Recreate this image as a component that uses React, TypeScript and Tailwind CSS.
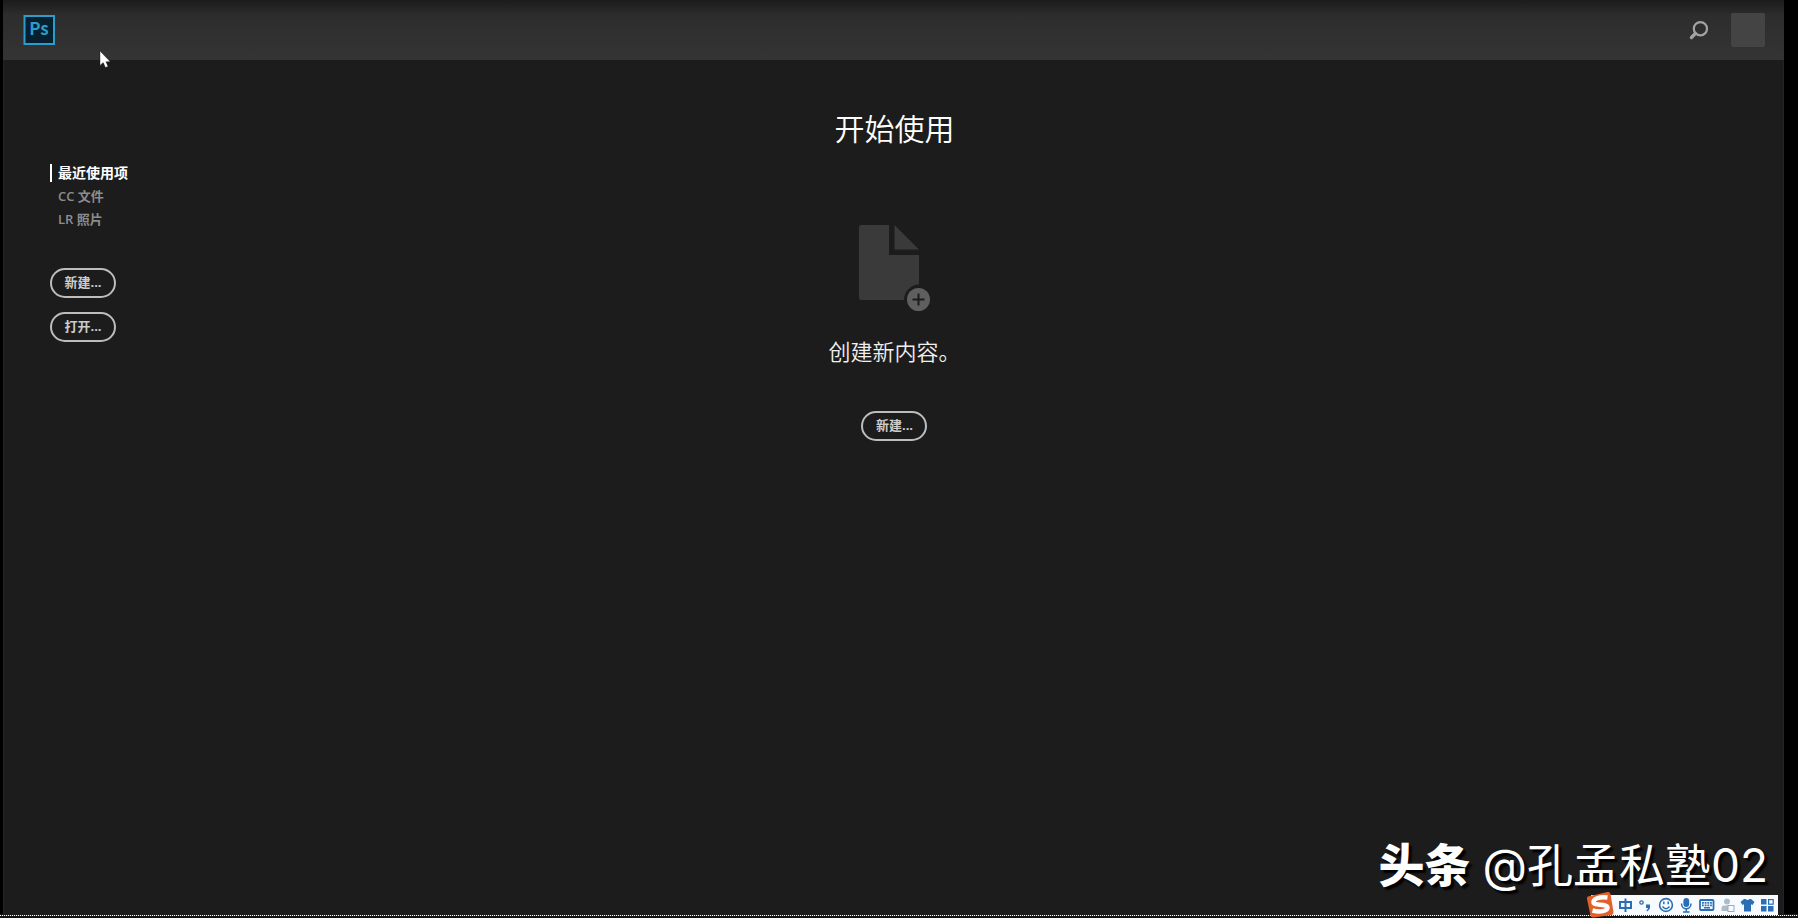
import React from "react";

function PillButton({ children }: { children: React.ReactNode }) {
  return (
    <button
      type="button"
      className="flex h-[30px] w-[66px] items-center justify-center rounded-full border-2 border-[#bdbdbd] pb-[2px] text-[13px] leading-none font-bold text-[#cccccc]"
    >
      {children}
    </button>
  );
}

function PsLogo() {
  return (
    <svg width="32" height="31" viewBox="0 0 32 31" role="img" aria-label="Photoshop">
      <rect x="1.500" y="1" width="29.500" height="28" fill="#06202f" stroke="#2d9cc9" strokeWidth="2" />
      <text x="16" y="20" textAnchor="middle" fontSize="17" fontWeight="700" fill="#2d9cc9" fontFamily="'Noto Sans CJK SC', sans-serif">
        Ps
      </text>
    </svg>
  );
}

function SearchIcon() {
  return (
    <svg width="20" height="20" viewBox="0 0 20 20" fill="none" stroke="#a3a3a3" aria-hidden="true">
      <circle cx="11.400" cy="8.700" r="6.600" strokeWidth="2.200" />
      <path d="M6.400 13.500 2.400 17.500" strokeWidth="3.200" strokeLinecap="round" />
    </svg>
  );
}

function NewDocumentIcon() {
  return (
    <svg width="72" height="87" viewBox="0 0 72 87" aria-hidden="true">
      <path d="M2 0H30V30H60V59.500A15.500 15.500 0 0 0 45 75H2Q0 75 0 73V2Q0 0 2 0Z" fill="#3a3a3a" />
      <path d="M35.500 0 60 24.500H35.500Z" fill="#3a3a3a" />
      <circle cx="59.500" cy="74.500" r="11.500" fill="#5f5f5f" />
      <path d="M53.500 74.500H65.500M59.500 68.500V80.500" stroke="#1c1c1c" strokeWidth="2" />
    </svg>
  );
}

function Cursor() {
  return (
    <svg className="absolute top-[50px] left-[99px]" width="12" height="19" viewBox="0 0 12 19" aria-hidden="true">
      <path d="M1 1V15.500L4.200 12.600 6.400 17.500 9 16.400 7 11.700H11.300Z" fill="#fff" stroke="#111" strokeWidth=".4" />
    </svg>
  );
}

function InputMethodBar() {
  return (
    <div className="absolute right-[20px] bottom-[3px] flex h-[20px] items-center bg-[#f7fbff] pl-[27px]">
      <svg className="absolute -top-[4px] -left-[5px]" width="29" height="27" viewBox="0 0 29 27" aria-hidden="true">
        <path d="M2 5.500 21.500 1Q24 .6 24.500 3L27.500 21Q27.800 23.400 25.500 24L7.500 26.500Q5 26.800 4.500 24.500L1 8Q.5 6 2 5.500Z" fill="#e2602a" />
        <path d="M21.500 6.500C13 5.500 7 8 7.500 11.500 8 15 21 12.500 21.500 16.500 22 20 14 21.500 6.500 19.500" fill="none" stroke="#fff" strokeWidth="4.400" />
      </svg>
      <svg width="137" height="20" viewBox="0 0 137 20" fill="none" stroke="#2a6fb5" aria-hidden="true">
        <path d="M2 7H13V13H2ZM7.500 3.500V17" strokeWidth="2" />
        <circle cx="23.500" cy="7.500" r="1.700" strokeWidth="1.300" />
        <path d="M28 9.500H32V13Q31 15.500 29 16.500L28.400 15Q30 14.300 30 13H28Z" fill="#2a6fb5" stroke="none" />
        <circle cx="48" cy="10" r="6.400" strokeWidth="1.600" />
        <path d="M45.800 6.500V9.200M50.200 6.500V9.200M44.500 11.500Q48 15.800 51.500 11.500" strokeWidth="1.500" />
        <rect x="65.400" y="3" width="5.800" height="9" rx="2.900" fill="#2a6fb5" stroke="none" />
        <path d="M63.500 8.500C63.500 15.500 73 15.500 73 8.500M68.300 14V17M65 17H71.600" strokeWidth="1.500" />
        <rect x="82" y="5" width="13.500" height="10" rx="1" strokeWidth="1.800" />
        <path d="M84 7.800H94M84 10.300H94" strokeWidth="1.800" strokeDasharray="1.800 .9" />
        <path d="M86 12.800H92" strokeWidth="1.500" />
        <circle cx="109" cy="6.500" r="3" fill="#aebdca" stroke="none" />
        <path d="M103.500 16V13Q103.500 10.500 106 10.500H112V16Z" fill="#aebdca" stroke="none" />
        <rect x="110" y="10.500" width="6" height="6" fill="#f7fbff" stroke="#9babb9" />
        <path d="M126 4 122.500 7 124.500 10 126 9.200V16.500H133V9.200L134.500 10 136.500 7 133 4H131.500Q129.500 6 127.500 4Z" fill="#2a6fb5" stroke="none" />
      </svg>
      <svg className="ml-[5px]" width="18" height="20" viewBox="0 0 18 20" fill="#2a6fb5" aria-hidden="true">
        <rect x="1" y="4" width="5.500" height="5.500" />
        <rect x="8.600" y="4.600" width="4.600" height="4.600" fill="none" stroke="#2a6fb5" strokeWidth="1.200" />
        <rect x="1" y="11" width="5.500" height="5.500" />
        <rect x="8" y="11" width="5.500" height="5.500" />
      </svg>
    </div>
  );
}

const tabs = ["最近使用项", "CC 文件", "LR 照片"];

export default function App() {
  return (
    <div className="relative flex min-h-screen flex-col overflow-hidden bg-black pr-[14px] pl-[3px] font-['Open_Sans','Noto_Sans_CJK_SC',sans-serif]">
      <header className="flex h-[60px] items-center justify-between bg-linear-to-b from-[#1b1b1b] via-[#2d2d2d] via-25% to-[#343434] pr-[19px] pl-[20px]">
        <PsLogo />
        <div className="flex items-center gap-[22px]">
          <button type="button" aria-label="搜索">
            <SearchIcon />
          </button>
          <button type="button" aria-label="账户" className="size-[34px] rounded-xs bg-[#444444]" />
        </div>
      </header>

      <main className="grid flex-1 grid-cols-[1fr_auto_1fr] items-start border-x border-[#242424] bg-[#1c1c1c]">
        <aside className="pt-[101px] pl-[46px]">
          <nav className="flex flex-col items-start">
            {tabs.map((tab, index) => (
              <a
                key={tab}
                href="#"
                className={
                  index === 0
                    ? "flex h-[24px] items-center text-[14px] leading-none font-bold text-white"
                    : "flex h-[23px] items-center text-[13px] leading-none font-semibold text-[#8c8c8c]"
                }
              >
                <span className={index === 0 ? "mr-[6px] h-[18px] w-[2px] bg-white" : "mr-[6px] h-[18px] w-[2px]"} />
                {tab}
              </a>
            ))}
          </nav>
          <div className="mt-[37px] flex flex-col gap-[14px]">
            <PillButton>新建...</PillButton>
            <PillButton>打开...</PillButton>
          </div>
        </aside>

        <section className="flex flex-col items-center pt-[47px] pl-[2px]">
          <h1 className="text-[30px] leading-[44px] font-[350] text-white">开始使用</h1>
          <div className="mt-[74px] pl-[2px]">
            <NewDocumentIcon />
          </div>
          <p className="mt-[23px] text-[22px] leading-[32px] font-[350] text-[#f0f0f0]">创建新内容。</p>
          <div className="mt-[44px]">
            <PillButton>新建...</PillButton>
          </div>
        </section>
      </main>

      <div className="-mr-[14px] -ml-[3px] h-[4px] bg-[#1c1c1c] pt-px">
        <div className="h-px bg-[repeating-linear-gradient(90deg,#ffffff_0_1px,#333_1px_2px)]" />
        <div className="h-[2px] bg-[#151515]" />
      </div>

      <div className="absolute right-[30px] bottom-[20px] flex items-center gap-[12px] font-['Inter','Noto_Sans_CJK_SC',sans-serif] text-[46px] leading-[66px] whitespace-nowrap text-white [text-shadow:3px_3px_2px_#000]">
        <span className="font-black">头条</span>
        <span className="font-normal">@孔孟私塾02</span>
      </div>
      <InputMethodBar />
      <Cursor />
    </div>
  );
}
